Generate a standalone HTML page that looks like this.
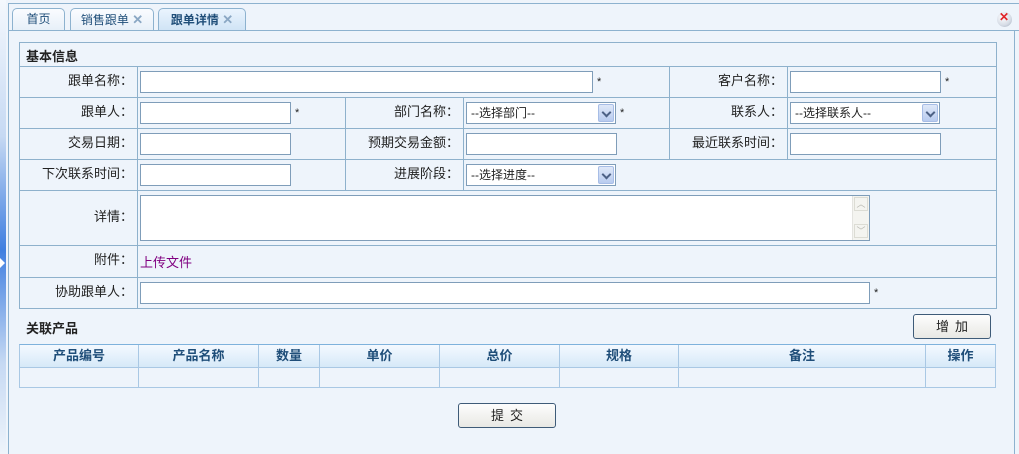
<!DOCTYPE html>
<html><head><meta charset="utf-8"><style>
*{margin:0;padding:0;box-sizing:border-box}
body{width:1019px;height:454px;background:#eef4fb;font-family:"Liberation Sans","Noto Sans CJK SC",sans-serif;font-size:12px;color:#222;position:relative;overflow:hidden}
.a{position:absolute}
.lbl{position:absolute;text-align:right;font-size:13px;line-height:16px}
.in{position:absolute;background:#fff;border:1px solid #7f9db9;height:22px}
.sel{position:absolute;background:#fff;border:1px solid #7f9db9;height:22px;font-size:12px;line-height:20px;padding-left:4px}
.sel i{position:absolute;right:1px;top:1px;width:16px;height:18px;background:linear-gradient(#dfe8f8,#b8cbef);border:1px solid #a7bde6;border-radius:2px}
.sel i:after{content:"";position:absolute;left:4px;top:4px;width:5px;height:5px;border-right:2px solid #4d6185;border-bottom:2px solid #4d6185;transform:rotate(45deg)}
.star{position:absolute;font-size:11px}
.h{position:absolute;background:#8eb1cc}
.th{position:absolute;top:345px;height:22px;text-align:center;font-weight:bold;color:#1f4e79;font-size:13px;line-height:22px;background:linear-gradient(#f4f9ff,#d6e9f8)}
.btn{position:absolute;border:1px solid #3e5b78;border-radius:3px;background:linear-gradient(#fdfdfd,#e8e8e4);text-align:center;font-size:13px;letter-spacing:6px}
.tab{position:absolute;top:8px;height:23px;border:1px solid #8db2cf;border-bottom:none;border-radius:5px 5px 0 0;background:linear-gradient(#fafcff,#e6eff8);font-size:12px;color:#1f4e79;line-height:21px;text-align:center}
.tab b{color:#8aa7c4;font-size:13px}
</style></head><body>
<div class="a" style="left:0;top:0;width:6px;height:454px;background:linear-gradient(#f4f8fd 0%,#c6d9f3 30%,#3f7fe0 55%,#c6d9f3 80%,#eef4fb 100%)"></div>
<div class="a" style="left:0;top:258px;width:0;height:0;border-left:5px solid #fff;border-top:5px solid transparent;border-bottom:5px solid transparent"></div>
<div class="a" style="left:8px;top:3px;width:1011px;height:1px;background:#8db2cf"></div>
<div class="a" style="left:8px;top:3px;width:1px;height:451px;background:#8db2cf"></div>
<div class="tab" style="left:12px;width:53px">首页</div>
<div class="tab" style="left:70px;width:84px">销售跟单 <b>✕</b></div>
<div class="tab" style="left:158px;width:88px;background:linear-gradient(#eaf4fe,#cfe3f5);font-weight:bold">跟单详情 <b>✕</b></div>
<div class="a" style="left:8px;top:30px;width:1011px;height:1px;background:#8db2cf"></div>
<div class="a" style="left:1014px;top:30px;width:1px;height:424px;background:#8db2cf"></div>
<div class="a" style="left:997px;top:12px;width:15px;height:15px;border-radius:50%;background:radial-gradient(circle at 40% 35%,#fff,#d6dce6 60%,#9aa5b5);"></div>
<div class="a" style="left:999px;top:10px;color:#e0252a;font-weight:bold;font-size:12px">✕</div>

<div class="a" style="left:19px;top:42px;width:978px;height:267px;border:1px solid #8eb1cc"></div>
<div class="a" style="left:26px;top:46px;font-weight:bold;font-size:13px">基本信息</div>
<div class="h" style="left:19px;top:66px;width:978px;height:1px"></div>
<div class="h" style="left:19px;top:97px;width:978px;height:1px"></div>
<div class="h" style="left:19px;top:128px;width:978px;height:1px"></div>
<div class="h" style="left:19px;top:159px;width:978px;height:1px"></div>
<div class="h" style="left:19px;top:190px;width:978px;height:1px"></div>
<div class="h" style="left:19px;top:245px;width:978px;height:1px"></div>
<div class="h" style="left:19px;top:277px;width:978px;height:1px"></div>
<div class="h" style="left:137px;top:66px;width:1px;height:242px"></div>
<div class="h" style="left:669px;top:66px;width:1px;height:31px"></div>
<div class="h" style="left:787px;top:66px;width:1px;height:31px"></div>
<div class="h" style="left:345px;top:97px;width:1px;height:93px"></div>
<div class="h" style="left:463px;top:97px;width:1px;height:93px"></div>
<div class="h" style="left:669px;top:97px;width:1px;height:62px"></div>
<div class="h" style="left:787px;top:97px;width:1px;height:62px"></div>

<div class="lbl" style="left:20px;width:113px;top:73px">跟单名称：</div>
<div class="in" style="left:140px;top:71px;width:453px"></div><div class="star" style="left:597px;top:76px">*</div>
<div class="lbl" style="left:670px;width:113px;top:73px">客户名称：</div>
<div class="in" style="left:790px;top:71px;width:151px"></div><div class="star" style="left:945px;top:76px">*</div>

<div class="lbl" style="left:20px;width:113px;top:104px">跟单人：</div>
<div class="in" style="left:140px;top:102px;width:151px"></div><div class="star" style="left:295px;top:107px">*</div>
<div class="lbl" style="left:346px;width:113px;top:104px">部门名称：</div>
<div class="sel" style="left:466px;top:102px;width:150px">--选择部门--<i></i></div><div class="star" style="left:620px;top:107px">*</div>
<div class="lbl" style="left:670px;width:113px;top:104px">联系人：</div>
<div class="sel" style="left:790px;top:102px;width:150px">--选择联系人--<i></i></div>

<div class="lbl" style="left:20px;width:113px;top:135px">交易日期：</div>
<div class="in" style="left:140px;top:133px;width:151px"></div>
<div class="lbl" style="left:346px;width:113px;top:135px">预期交易金额：</div>
<div class="in" style="left:466px;top:133px;width:151px"></div>
<div class="lbl" style="left:670px;width:113px;top:135px">最近联系时间：</div>
<div class="in" style="left:790px;top:133px;width:151px"></div>

<div class="lbl" style="left:20px;width:113px;top:166px">下次联系时间：</div>
<div class="in" style="left:140px;top:164px;width:151px"></div>
<div class="lbl" style="left:346px;width:113px;top:166px">进展阶段：</div>
<div class="sel" style="left:466px;top:164px;width:150px">--选择进度--<i></i></div>

<div class="lbl" style="left:20px;width:113px;top:209px">详情：</div>
<div class="in" style="left:140px;top:195px;width:730px;height:46px"><div class="a" style="right:0;top:0;width:17px;height:44px;background:#f4f4f0;border-left:1px solid #e4e4e0"><div class="a" style="left:1px;top:1px;width:14px;height:14px;border:1px solid #dcdcd4;color:#b8b8b0;font-size:9px;text-align:center;line-height:12px">︿</div><div class="a" style="left:1px;top:28px;width:14px;height:14px;border:1px solid #dcdcd4;color:#b8b8b0;font-size:9px;text-align:center;line-height:12px">﹀</div></div></div>

<div class="lbl" style="left:20px;width:113px;top:252px">附件：</div>
<div class="a" style="left:140px;top:252px;font-size:13px;color:#800080">上传文件</div>

<div class="lbl" style="left:20px;width:113px;top:284px">协助跟单人：</div>
<div class="in" style="left:140px;top:282px;width:730px"></div><div class="star" style="left:874px;top:287px">*</div>

<div class="a" style="left:26px;top:318px;font-weight:bold;font-size:13px">关联产品</div>
<div class="btn" style="left:913px;top:314px;width:78px;height:25px;line-height:23px;padding-left:6px">增加</div>

<div class="a" style="left:19px;top:344px;width:977px;height:44px;border:1px solid #a9c8e4;border-top:1px solid #7eb2dc"></div>
<div class="th" style="left:20px;width:118px">产品编号</div>
<div class="th" style="left:139px;width:119px">产品名称</div>
<div class="th" style="left:259px;width:60px">数量</div>
<div class="th" style="left:320px;width:119px">单价</div>
<div class="th" style="left:440px;width:119px">总价</div>
<div class="th" style="left:560px;width:118px">规格</div>
<div class="th" style="left:679px;width:246px">备注</div>
<div class="th" style="left:926px;width:69px">操作</div>
<div class="a" style="left:19px;top:367px;width:977px;height:1px;background:#a9c8e4"></div>
<div class="a" style="left:138px;top:345px;width:1px;height:42px;background:#a9c8e4"></div>
<div class="a" style="left:258px;top:345px;width:1px;height:42px;background:#a9c8e4"></div>
<div class="a" style="left:319px;top:345px;width:1px;height:42px;background:#a9c8e4"></div>
<div class="a" style="left:439px;top:345px;width:1px;height:42px;background:#a9c8e4"></div>
<div class="a" style="left:559px;top:345px;width:1px;height:42px;background:#a9c8e4"></div>
<div class="a" style="left:678px;top:345px;width:1px;height:42px;background:#a9c8e4"></div>
<div class="a" style="left:925px;top:345px;width:1px;height:42px;background:#a9c8e4"></div>

<div class="btn" style="left:458px;top:403px;width:98px;height:25px;line-height:23px;padding-left:6px">提交</div>
</body></html>
